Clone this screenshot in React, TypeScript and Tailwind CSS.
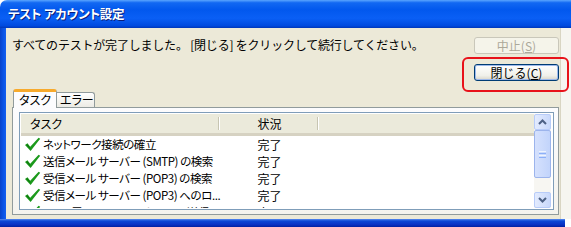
import React from "react";

const Check = () => (
  <svg width="17" height="15" viewBox="0 0 17 15" className="shrink-0">
    <polygon points="1,8 3.5,6.2 6.2,9.8 14.6,0.8 16.2,1.8 6.6,14" fill="#1C9A1C" />
    <polygon points="2.2,8 3.5,7.2 6.2,11 6.5,12.6" fill="#0E7A0E" />
  </svg>
);

const rows = [
  "ネットワーク接続の確立",
  "送信メール サーバー (SMTP) の検索",
  "受信メール サーバー (POP3) の検索",
  "受信メール サーバー (POP3) へのロ...",
  "テスト電子メール メッセージの送信",
];

const Chevron = ({ down }: { down?: boolean }) => (
  <svg width="9" height="6" viewBox="0 0 9 6">
    <polyline
      points={down ? "1,1 4.5,4.5 8,1" : "1,5 4.5,1.5 8,5"}
      fill="none"
      stroke="#4D6185"
      strokeWidth="2"
    />
  </svg>
);

export default function App() {
  return (
    <div
      className="relative w-[571px] h-[227px] bg-white overflow-hidden text-black"
      style={{ fontFamily: '"Noto Sans CJK JP", "Noto Sans", sans-serif' }}
    >
      <div className="flex flex-col w-[571px] h-[227px]">
        {/* Title bar */}
        <div className="h-[28px] shrink-0 rounded-tl-[7px] flex items-center pl-[8px] bg-[linear-gradient(to_bottom,#5AA5FF_0%,#1268F2_10%,#0258EE_35%,#0A5FF5_65%,#004ADF_92%,#0036B8_100%)]">
          <span className="text-white font-bold text-[12.5px] leading-none tracking-[-0.2px] [font-feature-settings:'palt'] [text-shadow:1px_1px_0_#0A1E7A]">
            テスト アカウント設定
          </span>
        </div>
        {/* Middle */}
        <div className="flex h-[191px] shrink-0">
          <div className="w-[6px] shrink-0 bg-[linear-gradient(to_right,#0842C9,#0A55E8_60%,#1660EE)]" />
          <div className="w-[555px] shrink-0 bg-[#ECE9D8] pl-[6px] pr-[1px] pt-[9px] flex flex-col border-r border-[#D9D5C3]">
            {/* Top section */}
            <div className="flex justify-between">
              <div className="text-[12px] leading-[16px] tracking-[-0.2px] whitespace-nowrap">
                すべてのテストが完了しました。 [閉じる] をクリックして続行してください。
              </div>
              <div className="flex flex-col w-[85px] gap-[10px] shrink-0">
                <div className="h-[17px] rounded-[3px] border border-[#C9C7BA] bg-[#F5F4EA] flex items-center justify-center text-[12px] leading-none text-[#ACA899]">
                  中止(<span className="underline">S</span>)
                </div>
                <div className="h-[17px] rounded-[3px] border border-[#003C74] bg-[linear-gradient(to_bottom,#FFFFFF,#F0F0EA_70%,#D8D5C9)] flex items-center justify-center text-[12px] leading-none shadow-[inset_0_0_0_1px_#9DB9EB]">
                  閉じる(<span className="underline">C</span>)
                </div>
              </div>
            </div>
            {/* Tabs */}
            <div className="flex items-end h-[18px] mt-[8px] pl-[1px] relative z-10 [font-feature-settings:'palt']">
              <div className="h-[19px] mb-[-1px] w-[44px] bg-[#FCFCFE] border-l border-r border-[#919B9C] rounded-t-[3px] border-t-[3px] border-t-[#F7AA2C] flex items-start pt-[1px] pl-[5px] text-[12px] leading-[14px]">
                タスク
              </div>
              <div className="h-[15px] w-[38px] bg-[linear-gradient(to_bottom,#FFFFFF,#ECEBE5)] border-t border-r border-[#919B9C] rounded-tr-[3px] flex items-center pl-[3px] text-[12px] leading-none">
                エラー
              </div>
            </div>
            {/* Panel */}
            <div className="w-[547px] h-[108px] border border-[#919B9C] bg-[linear-gradient(to_bottom,#FCFCFE,#F4F3EE)] pt-[4px] pl-[6px]">
              <div className="w-[535px] h-[98px] border border-[#7F9DB9] bg-white p-[1px] flex">
                <div className="flex-1 flex flex-col overflow-hidden">
                  {/* header */}
                  <div className="h-[22px] shrink-0 flex bg-[#EBEADB] border-b-[3px] border-[#D6D2C2] text-[12px] leading-none [font-feature-settings:'palt']">
                    <div className="w-[199px] flex items-center pl-[9px] relative">
                      タスク
                      <div className="absolute right-0 top-[3px] bottom-[3px] w-[2px] border-l border-[#C7C5B2] bg-white" />
                    </div>
                    <div className="w-[99px] flex items-center justify-center relative">
                      状況
                      <div className="absolute right-0 top-[3px] bottom-[3px] w-[2px] border-l border-[#C7C5B2] bg-white" />
                    </div>
                    <div className="flex-1" />
                  </div>
                  {rows.map((r) => (
                    <div key={r} className="h-[17px] shrink-0 flex leading-none">
                      <div className="w-[199px] shrink-0 flex items-center pl-[3px] gap-[2px] whitespace-nowrap">
                        <Check />
                        <span className="text-[11.5px] tracking-[-0.45px] [font-feature-settings:'palt']">{r}</span>
                      </div>
                      <div className="w-[99px] flex items-center justify-center text-[12px]">完了</div>
                    </div>
                  ))}
                </div>
                {/* Scrollbar */}
                <div className="w-[17px] shrink-0 flex flex-col bg-[#F7F6F2] mr-[1px]">
                  <div className="h-[16px] rounded-[2px] border border-[#B8CCF9] bg-[linear-gradient(to_right,#E3EBFE,#C8D8FB)] flex items-center justify-center">
                    <Chevron />
                  </div>
                  <div className="h-[48px] rounded-[2px] border border-[#9CB4EC] bg-[linear-gradient(to_right,#D5E1FD,#C2D4FB)] flex flex-col items-center justify-center gap-[1px]">
                    <div className="w-[7px] h-[1px] bg-[#EEF4FE]" />
                    <div className="w-[7px] h-[1px] bg-[#8CB0F8]" />
                    <div className="w-[7px] h-[1px] bg-[#EEF4FE]" />
                    <div className="w-[7px] h-[1px] bg-[#8CB0F8]" />
                  </div>
                  <div className="flex-1" />
                  <div className="h-[16px] rounded-[2px] border border-[#B8CCF9] bg-[linear-gradient(to_right,#E3EBFE,#C8D8FB)] flex items-center justify-center">
                    <Chevron down />
                  </div>
                </div>
              </div>
            </div>
          </div>
          <div className="flex-1 bg-[#F6F5F0]" />
        </div>
        {/* bottom frame */}
        <div className="flex h-[8px]">
          <div className="w-[565px] bg-[linear-gradient(to_bottom,#5A8CF0,#0A47D6_25%,#0831C4_70%,#0020A0)]" />
          <div className="flex-1 bg-white" />
        </div>
      </div>
      {/* red highlight annotation */}
      <div className="absolute left-[462px] top-[57px] w-[107px] h-[35px] border-2 border-[#E8121A] rounded-[6px]" />
    </div>
  );
}
